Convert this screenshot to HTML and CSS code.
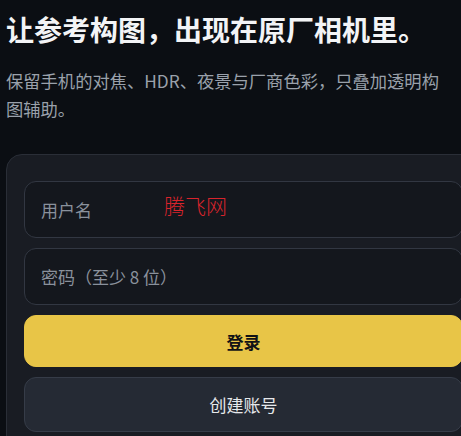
FILE: index.html
```html
<!DOCTYPE html>
<html lang="zh-CN">
<head>
<meta charset="utf-8">
<title>登录</title>
<link rel="stylesheet" href="styles.css">
</head>
<body>
<main class="page">
  <header class="hero">
    <h1 class="title">让参考构图，出现在原厂相机里。</h1>
    <p class="subtitle">保留手机的对焦、HDR、夜景与厂商色彩，只叠加透明构图辅助。</p>
  </header>
  <form class="card">
    <input class="field" type="text" placeholder="用户名">
    <input class="field" type="password" placeholder="密码（至少 8 位）">
    <button class="btn btn-primary" type="button">登录</button>
    <button class="btn btn-secondary" type="button">创建账号</button>
  </form>
</main>
<div class="watermark">腾飞网</div>
</body>
</html>
```

FILE: styles.css
```css
html, body {
  margin: 0;
  padding: 0;
  overflow: hidden;
  background: #0b0e13;
}

body {
  font-family: "Noto Sans CJK SC", "Noto Sans", sans-serif;
  color: #eef0f3;
  width: 461px;
  height: 436px;
  position: relative;
}

.page {
  padding: 12px 0 0 6px;
  width: 475px;
}

.hero {
  margin-bottom: 31px;
}

.title {
  margin: 0 0 20px 0;
  font-size: 28px;
  line-height: 35px;
  font-weight: 700;
  color: #f3f4f6;
}

.subtitle {
  margin: 0;
  font-size: 17.3px;
  line-height: 28px;
  color: #9aa1ab;
  max-width: 436px;
}

.card {
  box-sizing: border-box;
  width: 475px;
  background: #191c23;
  border: 1px solid #2a2e37;
  border-radius: 16px;
  padding: 26px 17px 20px 17px;
  display: flex;
  flex-direction: column;
  gap: 10px;
}

.field {
  box-sizing: border-box;
  height: 57px;
  width: 100%;
  background: #14171d;
  border: 1px solid #323742;
  border-radius: 12px;
  padding: 0 16px;
  font-family: inherit;
  font-size: 17px;
  color: #eef0f3;
  outline: none;
}

.field::placeholder {
  color: #8a919c;
}

.btn {
  box-sizing: border-box;
  width: 100%;
  border-radius: 12px;
  font-family: inherit;
  font-size: 17px;
  cursor: pointer;
}

.btn-primary {
  height: 52px;
  background: #e8c547;
  border: 1px solid #e8c547;
  color: #111216;
  font-weight: 700;
}

.btn-secondary {
  height: 55px;
  background: #252a34;
  border: 1px solid #363c48;
  color: #e6e8eb;
}

.watermark {
  position: absolute;
  left: 164px;
  top: 191px;
  font-family: "Noto Sans CJK SC", sans-serif;
  font-weight: 300;
  font-size: 21px;
  line-height: 28px;
  color: #d8242c;
}
```
